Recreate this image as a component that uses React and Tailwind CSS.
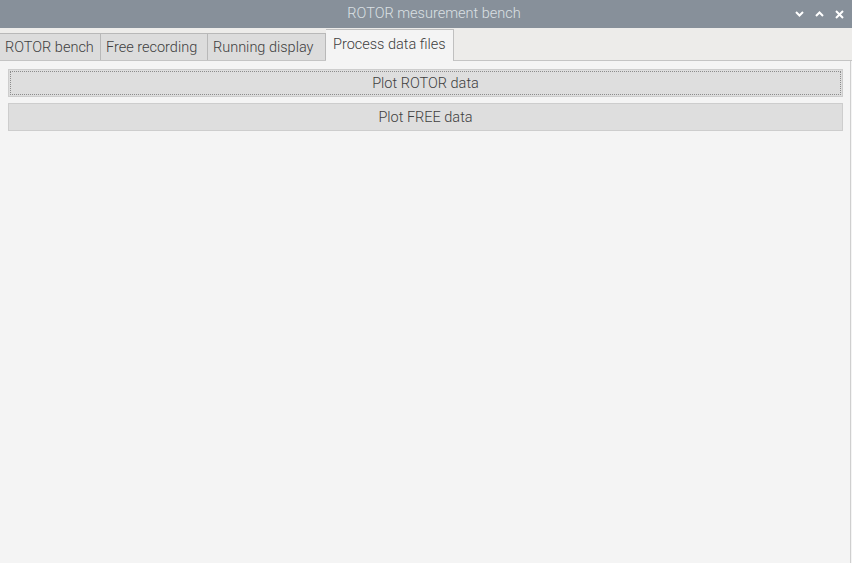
import React from "react";

const font = { fontFamily: "Roboto, 'Liberation Sans', sans-serif" };

function Chevron({ up }) {
  return (
    <svg width="9" height="6" viewBox="0 0 9 6" className="block">
      <path
        d={up ? "M1 5 L4.5 1.5 L8 5" : "M1 1 L4.5 4.5 L8 1"}
        fill="none"
        stroke="#ffffff"
        strokeWidth="2"
      />
    </svg>
  );
}

function CloseIcon() {
  return (
    <svg width="9" height="9" viewBox="0 0 9 9" className="block">
      <path d="M1 1 L8 8 M8 1 L1 8" fill="none" stroke="#ffffff" strokeWidth="2" />
    </svg>
  );
}

export default function App() {
  const tabs = [
    { t: "ROTOR bench", w: "w-[101px]" },
    { t: "Free recording", w: "w-[107px]" },
    { t: "Running display", w: "w-[118px]" },
  ];
  return (
    <div
      className="w-[852px] h-[563px] flex flex-col bg-[#f4f4f4] overflow-hidden text-[14.5px] font-light text-[#404040]"
      style={font}
    >
      {/* Title bar */}
      <div className="h-[28px] shrink-0 bg-[#87909a] relative flex items-center justify-center">
        <span className="text-[#dbe0e4] text-[14.5px] leading-none pl-[16px]">ROTOR mesurement bench</span>
        <div className="absolute right-[8px] top-0 h-full flex items-center gap-[11px]">
          <Chevron />
          <Chevron up />
          <CloseIcon />
        </div>
      </div>

      {/* Tab strip */}
      <div className="h-[33px] shrink-0 bg-[#edecea] flex items-end border-b border-[#c4c4c4] relative">
        {tabs.map(({ t, w }) => (
          <div
            key={t}
            className={`h-[27px] ${w} flex items-center pl-[5px] pt-[2px] bg-[#dcdcdc] border-t border-[#b8b8b8] border-r whitespace-nowrap`}
          >
            {t}
          </div>
        ))}
        <div className="h-[32px] -mb-px flex items-center pl-[7px] pb-[1px] bg-[#f4f4f4] border-t border-r border-[#c0c0c0] w-[128px] whitespace-nowrap">
          Process data files
        </div>
      </div>

      {/* Content */}
      <div className="flex-1 flex flex-col gap-[6px] pt-[8px] pl-[8px] pr-[8px] border-r border-[#cfcfcf] w-[851px]">
        <button
          className="h-[28px] w-[835px] bg-[#dedede] border border-[#cdcdcd] p-[1px] flex font-light"
          style={font}
        >
          <span className="flex-1 flex items-center justify-center pt-[2px] border border-dotted border-[#8c8c8c] text-[#404040] text-[14.5px]">
            Plot ROTOR data
          </span>
        </button>
        <button
          className="h-[28px] w-[835px] bg-[#dedede] border border-[#cdcdcd] flex items-center justify-center pt-[2px] text-[#404040] text-[14.5px] font-light"
          style={font}
        >
          Plot FREE data
        </button>
      </div>
    </div>
  );
}
